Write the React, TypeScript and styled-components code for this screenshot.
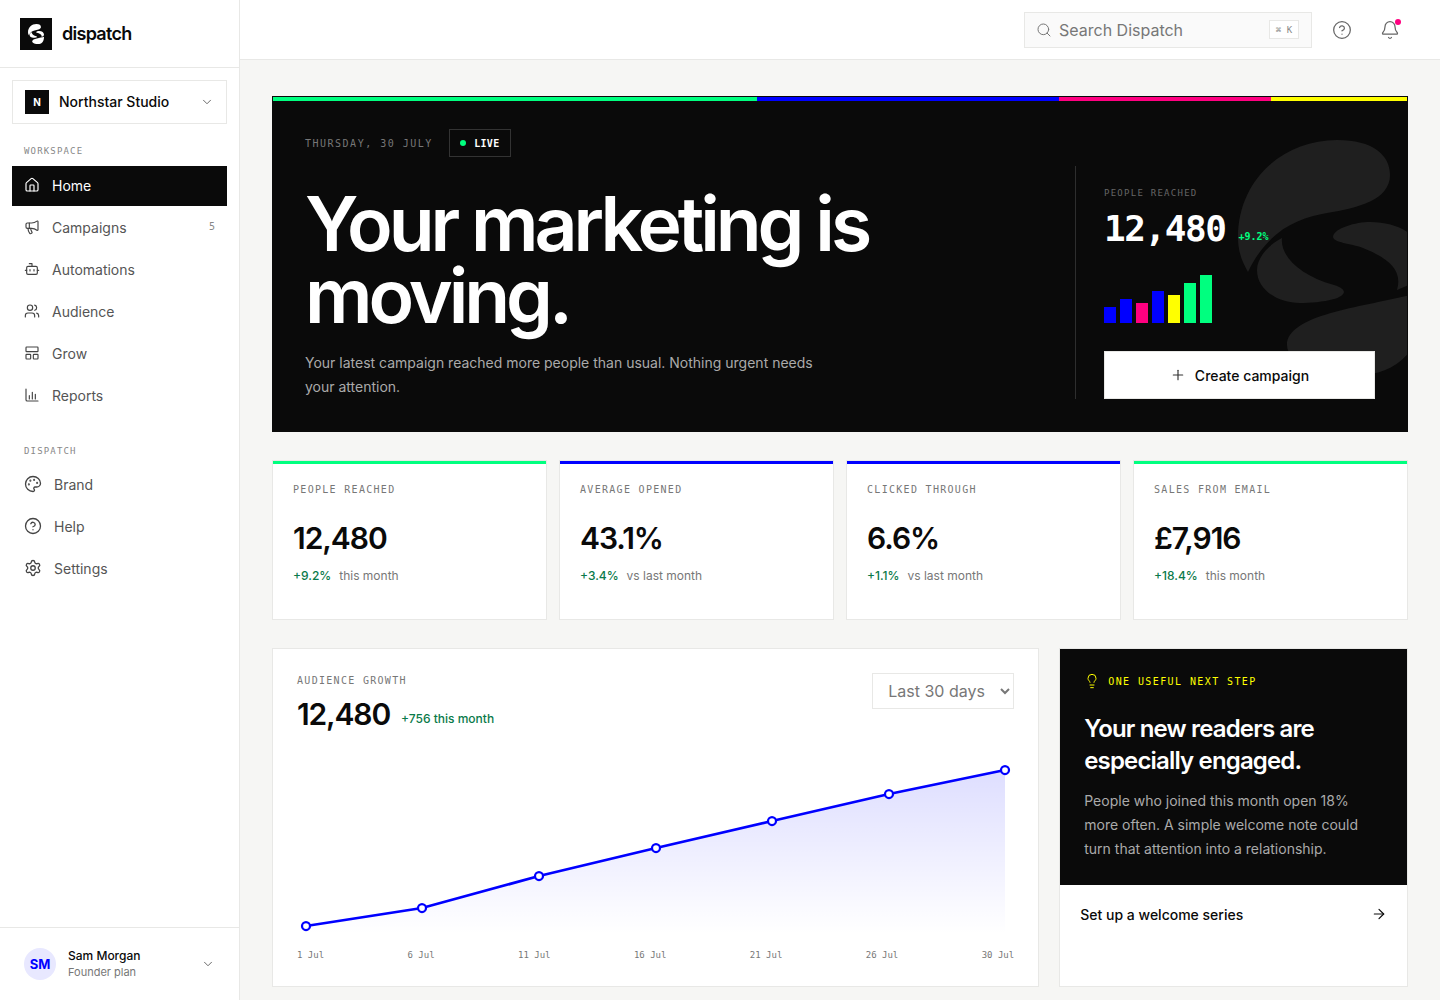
import React from "react";
import styled, { createGlobalStyle } from "styled-components";
import {
  ArrowRight,
  Bell,
  Bot,
  ChevronDown,
  CircleHelp,
  House,
  LayoutPanelTop,
  Lightbulb,
  Megaphone,
  Palette,
  Plus,
  Search,
  Settings,
  Users,
} from "lucide-react";

const INK = "#0a0a0a";
const LINE = "#e8e8e6";
const GREEN = "#00ff7f";
const BLUE = "#0000ff";
const PINK = "#ff0080";
const YELLOW = "#ffff00";
const MONO = `"DejaVu Sans Mono", "Liberation Mono", monospace`;

const GlobalStyle = createGlobalStyle`
  html, body { margin: 0; padding: 0; height: 100%; }
  body {
    font-family: Inter, "Noto Sans", sans-serif;
    background: #f6f6f4;
    color: ${INK};
  }
  * { box-sizing: border-box; }
`;

const S_BLOBS =
  "M0 97C0 40 45 0 99 0C135 0 152 15 152 35C152 60 120 68 89 73C60 78 30 90 10 132C3 120 0 110 0 97Z" +
  "M44 98C42 115 60 135 96 145C112 150 106 156 96 159C85 162 72 163 62 163C40 163 19 150 19 130C19 118 30 105 44 98Z" +
  "M95 97C96 88 118 82 132 82C165 82 188 100 188 125C188 135 180 142 159 150C165 130 150 118 125 108C112 103 96 103 95 97Z" +
  "M188 150C150 165 49 170 49 205C49 225 90 235 120 235C155 235 188 215 188 150Z";

const Shell = styled.div`
  display: grid;
  grid-template-columns: 240px 1fr;
  grid-template-rows: 100vh;
  height: 100vh;
  overflow: hidden;
`;

const Sidebar = styled.aside`
  display: flex;
  flex-direction: column;
  background: #fff;
  border-right: 1px solid ${LINE};
`;

const Brand = styled.div`
  height: 68px;
  flex: none;
  display: flex;
  align-items: center;
  gap: 10px;
  padding: 0 20px;
  border-bottom: 1px solid ${LINE};
`;

const LogoBox = styled.div`
  width: 32px;
  height: 32px;
  background: ${INK};
  display: flex;
  align-items: center;
  justify-content: center;
`;

const BrandName = styled.span`
  font-size: 18px;
  font-weight: 600;
  letter-spacing: -0.04em;
`;

const OrgSwitch = styled.div`
  margin: 12px 12px 0;
  height: 44px;
  border: 1px solid ${LINE};
  display: flex;
  align-items: center;
  gap: 10px;
  padding: 0 12px;
  font-size: 14px;
  font-weight: 500;
  color: #555;

  span { flex: 1; color: ${INK}; padding-bottom: 2px; }
`;

const OrgMark = styled.div`
  width: 24px;
  height: 24px;
  background: ${INK};
  color: #fff;
  font-size: 10px;
  font-weight: 700;
  display: flex;
  align-items: center;
  justify-content: center;
`;

const NavTitle = styled.div<{ $top: number }>`
  margin: ${(p) => p.$top}px 12px 0;
  padding: 0 12px;
  height: 14px;
  line-height: 14px;
  font-family: ${MONO};
  font-size: 9px;
  letter-spacing: 0.13em;
  color: #888;
`;

const NavList = styled.nav<{ $gap: number }>`
  margin: ${(p) => p.$gap}px 12px 0;
  display: flex;
  flex-direction: column;
  gap: 2px;
`;

const NavItem = styled.a<{ $active?: boolean }>`
  height: 40px;
  display: flex;
  align-items: center;
  gap: 12px;
  padding: 0 12px 2px;
  font-size: 14px;
  color: ${(p) => (p.$active ? "#fff" : "#555")};
  background: ${(p) => (p.$active ? INK : "transparent")};

  svg { flex: none; color: ${(p) => (p.$active ? "#fff" : "#444")}; }
`;

const NavCount = styled.span`
  margin-left: auto;
  margin-top: -2px;
  font-family: ${MONO};
  font-size: 10px;
  color: #888;
`;

const UserBar = styled.div`
  margin-top: auto;
  height: 73px;
  flex: none;
  border-top: 1px solid ${LINE};
  display: flex;
  align-items: center;
  gap: 12px;
  padding: 0 24px;
  color: #555;
`;

const Avatar = styled.div`
  width: 32px;
  height: 32px;
  border-radius: 50%;
  background: #e8e8ff;
  color: ${BLUE};
  font-size: 13px;
  font-weight: 700;
  display: flex;
  align-items: center;
  justify-content: center;
`;

const UserText = styled.div`
  flex: 1;
  line-height: 16px;
`;

const UserName = styled.div`
  font-size: 12px;
  font-weight: 500;
  color: ${INK};
`;

const UserPlan = styled.div`
  font-size: 11px;
  color: #777;
`;

const Main = styled.div`
  display: flex;
  flex-direction: column;
  min-width: 0;
`;

const TopBar = styled.header`
  height: 60px;
  flex: none;
  background: #fff;
  border-bottom: 1px solid ${LINE};
  display: flex;
  align-items: center;
  justify-content: flex-end;
  padding: 0 40px 0 0;
  color: #666;
`;

const SearchBox = styled.div`
  width: 288px;
  height: 36px;
  background: #fafafa;
  border: 1px solid ${LINE};
  display: flex;
  align-items: center;
  gap: 7px;
  padding: 0 12px 0 11px;
  font-size: 16px;
  color: #777;
  margin-right: 20px;

  > span { flex: 1; }
`;

const Kbd = styled.kbd`
  width: 30px;
  height: 19px;
  background: #fff;
  border: 1px solid ${LINE};
  font-family: ${MONO};
  font-size: 9px;
  color: #888;
  display: flex;
  align-items: center;
  justify-content: center;
`;

const IconButton = styled.button`
  position: relative;
  width: 20px;
  height: 20px;
  margin-left: 28px;
  padding: 0;
  border: 0;
  background: none;
  color: #666;
  display: flex;
  align-items: center;
  justify-content: center;

  &:first-of-type { margin-left: 0; }
`;

const NoticeDot = styled.i`
  position: absolute;
  top: -1px;
  right: -1px;
  width: 6px;
  height: 6px;
  border-radius: 50%;
  background: ${PINK};
`;

const Content = styled.main`
  padding: 36px 32px;
  display: flex;
  flex-direction: column;
  gap: 28px;
`;

const Hero = styled.section`
  position: relative;
  height: 336px;
  flex: none;
  background: ${INK};
  border: 1px solid ${INK};
  overflow: hidden;
  display: flex;
  flex-direction: column;
`;

const Stripe = styled.div`
  height: 4px;
  flex: none;
  display: grid;
  grid-template-columns: 484fr 302fr 212fr 136fr;
`;

const StripePart = styled.div<{ $color: string }>`
  background: ${(p) => p.$color};
`;

const Watermark = styled.svg`
  position: absolute;
  left: 965px;
  top: 43px;
`;

const HeroBody = styled.div`
  position: relative;
  flex: 1;
  display: flex;
  padding: 28px 32px 32px;
`;

const HeroCopy = styled.div`
  flex: 1;
  min-width: 0;
`;

const HeroMeta = styled.div`
  display: flex;
  align-items: center;
  gap: 16px;
  height: 28px;
`;

const DateLine = styled.span`
  font-family: ${MONO};
  font-size: 10px;
  letter-spacing: 0.15em;
  color: #777;
`;

const LiveChip = styled.span`
  height: 28px;
  width: 62px;
  border: 1px solid #333;
  display: flex;
  align-items: center;
  justify-content: center;
  gap: 8px;
  font-family: ${MONO};
  font-size: 10px;
  font-weight: 700;
  letter-spacing: 0.03em;
  color: #fff;
`;

const LiveDot = styled.i`
  width: 6px;
  height: 6px;
  border-radius: 50%;
  background: ${GREEN};
`;

const HeroTitle = styled.h1`
  margin: 31px 0 0;
  font-size: 75px;
  line-height: 72px;
  font-weight: 600;
  letter-spacing: -0.054em;
  color: #fff;
`;

const HeroText = styled.p`
  margin: 19px 0 0;
  max-width: 540px;
  font-size: 14px;
  line-height: 24px;
  color: #aaa;
`;

const HeroStats = styled.div`
  width: 300px;
  flex: none;
  margin-top: 37px;
  border-left: 1px solid #2e2e2e;
  padding: 20px 0 0 28px;
  display: flex;
  flex-direction: column;
`;

const HeroLabel = styled.div`
  font-family: ${MONO};
  font-size: 9px;
  line-height: 14px;
  letter-spacing: 0.14em;
  color: #666;
`;

const HeroFigure = styled.div`
  margin-top: 7px;
  display: flex;
  align-items: flex-start;
  gap: 13px;
`;

const HeroNumber = styled.span`
  font-family: ${MONO};
  font-size: 36px;
  line-height: 44px;
  font-weight: 700;
  letter-spacing: -0.04em;
  color: #fff;
`;

const HeroDelta = styled.span`
  margin-top: 23px;
  font-family: ${MONO};
  font-size: 10px;
  line-height: 14px;
  font-weight: 700;
  color: ${GREEN};
`;

const Bars = styled.div`
  margin-top: 24px;
  height: 48px;
  display: flex;
  align-items: flex-end;
  gap: 4px;
`;

const Bar = styled.div<{ $h: number; $color: string }>`
  width: 12px;
  height: ${(p) => p.$h}px;
  background: ${(p) => p.$color};
`;

const CreateButton = styled.button`
  margin-top: 28px;
  width: 271px;
  height: 48px;
  background: #fff;
  border: 1px solid ${LINE};
  display: flex;
  align-items: center;
  justify-content: center;
  gap: 9px;
  font-family: Inter, sans-serif;
  font-size: 14px;
  font-weight: 500;
  color: ${INK};

  svg { color: #333; }
`;

const Metrics = styled.section`
  display: grid;
  grid-template-columns: repeat(4, 1fr);
  gap: 12px;
  flex: none;
`;

const MetricCard = styled.article`
  height: 160px;
  background: #fff;
  border: 1px solid ${LINE};
`;

const AccentBar = styled.div<{ $color: string }>`
  height: 3px;
  background: ${(p) => p.$color};
`;

const MetricBody = styled.div`
  padding: 18px 20px 0;
`;

const Eyebrow = styled.div`
  font-family: ${MONO};
  font-size: 10px;
  line-height: 16px;
  letter-spacing: 0.13em;
  color: #777;
`;

const MetricValue = styled.div`
  margin-top: 20px;
  font-size: 30px;
  line-height: 40px;
  font-weight: 600;
  letter-spacing: -0.035em;
`;

const MetricNote = styled.div`
  margin-top: 8px;
  display: flex;
  gap: 8px;
  font-size: 12px;
  line-height: 20px;
  color: #777;

  b { font-weight: 500; color: #0a7a4a; }
`;

const Lower = styled.section`
  display: grid;
  grid-template-columns: 2.2fr 1fr;
  gap: 20px;
  height: 339px;
  flex: none;
`;

const ChartCard = styled.article`
  background: #fff;
  border: 1px solid ${LINE};
  padding: 24px 24px 0;
  display: flex;
  flex-direction: column;
`;

const ChartHead = styled.div`
  display: flex;
  justify-content: space-between;
  align-items: flex-start;
`;

const ChartFigure = styled.div`
  margin-top: 4px;
  display: flex;
  align-items: flex-start;
  gap: 11px;
`;

const ChartNumber = styled.span`
  font-size: 30px;
  line-height: 42px;
  font-weight: 600;
  letter-spacing: -0.038em;
`;

const ChartDelta = styled.span`
  margin-top: 18px;
  font-size: 12px;
  line-height: 16px;
  font-weight: 500;
  color: #0a7a4a;
`;

const RangeSelect = styled.select`
  width: 142px;
  height: 36px;
  background: #fff;
  border: 1px solid ${LINE};
  border-radius: 0;
  padding: 0 8px 0 11px;
  font-family: Inter, sans-serif;
  font-size: 16px;
  color: #777;
`;

const ChartSvg = styled.svg`
  display: block;
  margin-top: 19px;
`;

const AxisRow = styled.div`
  margin-top: 10px;
  display: flex;
  justify-content: space-between;
  font-family: ${MONO};
  font-size: 9px;
  line-height: 14px;
  color: #777;
`;

const StepCard = styled.article`
  background: #fff;
  border: 1px solid ${LINE};
  display: flex;
  flex-direction: column;
`;

const StepDark = styled.div`
  height: 236px;
  flex: none;
  background: ${INK};
  padding: 23px 24px 0 24px;
`;

const StepTag = styled.div`
  display: flex;
  align-items: center;
  gap: 8px;
  height: 18px;
  font-family: ${MONO};
  font-size: 10px;
  letter-spacing: 0.14em;
  color: ${YELLOW};
`;

const StepTitle = styled.h2`
  margin: 23px 0 0;
  font-size: 24px;
  line-height: 32px;
  font-weight: 600;
  letter-spacing: -0.035em;
  color: #fff;
`;

const StepText = styled.p`
  margin: 12px 0 0;
  font-size: 14px;
  line-height: 24px;
  color: #aaa;
`;

const StepAction = styled.div`
  display: flex;
  align-items: center;
  justify-content: space-between;
  height: 58px;
  padding: 0 20px;
  font-size: 14px;
  font-weight: 500;
`;

const mainNav = [
  { label: "Home", icon: <House size={16} strokeWidth={1.75} />, active: true },
  { label: "Campaigns", icon: <Megaphone size={16} strokeWidth={1.75} />, count: "5" },
  { label: "Automations", icon: <Bot size={16} strokeWidth={1.75} /> },
  { label: "Audience", icon: <Users size={16} strokeWidth={1.75} /> },
  { label: "Grow", icon: <LayoutPanelTop size={16} strokeWidth={1.75} /> },
  {
    label: "Reports",
    icon: (
      <svg width="16" height="16" viewBox="0 0 24 24" fill="none" stroke="currentColor" strokeWidth="1.75" strokeLinecap="round" strokeLinejoin="round">
        <path d="M3 3v16a2 2 0 0 0 2 2h16" />
        <path d="M8 18v-5M12.5 18V8M17 18v-7" />
      </svg>
    ),
  },
];

const otherNav = [
  { label: "Brand", icon: <Palette size={18} strokeWidth={1.75} /> },
  { label: "Help", icon: <CircleHelp size={18} strokeWidth={1.75} /> },
  { label: "Settings", icon: <Settings size={18} strokeWidth={1.75} /> },
];

const metrics = [
  { label: "PEOPLE REACHED", value: "12,480", delta: "+9.2%", note: "this month", accent: GREEN },
  { label: "AVERAGE OPENED", value: "43.1%", delta: "+3.4%", note: "vs last month", accent: BLUE },
  { label: "CLICKED THROUGH", value: "6.6%", delta: "+1.1%", note: "vs last month", accent: BLUE },
  { label: "SALES FROM EMAIL", value: "£7,916", delta: "+18.4%", note: "this month", accent: GREEN },
];

const heroBars = [
  { h: 16, color: BLUE },
  { h: 24, color: BLUE },
  { h: 20, color: PINK },
  { h: 32, color: BLUE },
  { h: 28, color: YELLOW },
  { h: 40, color: GREEN },
  { h: 48, color: GREEN },
];

// chart points, measured from the left of the plot
const points = [
  [9, 172],
  [125, 154],
  [242, 122],
  [359, 94],
  [475, 67],
  [592, 40],
  [708, 16],
];
const linePath = points.map(([x, y], i) => `${i ? "L" : "M"}${x} ${y}`).join(" ");
const days = ["1 Jul", "6 Jul", "11 Jul", "16 Jul", "21 Jul", "26 Jul", "30 Jul"];

const Mark = ({ size }: { size: number }) => (
  <svg width={size * 0.8} height={size} viewBox="0 0 188 235" fill="#fff">
    <path d={S_BLOBS} />
  </svg>
);

export default function App() {
  return (
    <>
      <GlobalStyle />
      <Shell>
        <Sidebar>
          <Brand>
            <LogoBox>
              <Mark size={20} />
            </LogoBox>
            <BrandName>dispatch</BrandName>
          </Brand>
          <OrgSwitch>
            <OrgMark>N</OrgMark>
            <span>Northstar Studio</span>
            <ChevronDown size={14} strokeWidth={1.5} />
          </OrgSwitch>
          <NavTitle $top={20}>WORKSPACE</NavTitle>
          <NavList $gap={8}>
            {mainNav.map((item) => (
              <NavItem key={item.label} $active={item.active}>
                {item.icon}
                {item.label}
                {item.count && <NavCount>{item.count}</NavCount>}
              </NavItem>
            ))}
          </NavList>
          <NavTitle $top={28}>DISPATCH</NavTitle>
          <NavList $gap={7}>
            {otherNav.map((item) => (
              <NavItem key={item.label}>
                {item.icon}
                {item.label}
              </NavItem>
            ))}
          </NavList>
          <UserBar>
            <Avatar>SM</Avatar>
            <UserText>
              <UserName>Sam Morgan</UserName>
              <UserPlan>Founder plan</UserPlan>
            </UserText>
            <ChevronDown size={14} strokeWidth={1.5} />
          </UserBar>
        </Sidebar>

        <Main>
          <TopBar>
            <SearchBox>
              <Search size={16} strokeWidth={1.5} />
              <span>Search Dispatch</span>
              <Kbd>⌘ K</Kbd>
            </SearchBox>
            <IconButton>
              <CircleHelp size={20} strokeWidth={1.5} />
            </IconButton>
            <IconButton>
              <Bell size={20} strokeWidth={1.5} />
              <NoticeDot />
            </IconButton>
          </TopBar>

          <Content>
            <Hero>
              <Stripe>
                <StripePart $color={GREEN} />
                <StripePart $color={BLUE} />
                <StripePart $color={PINK} />
                <StripePart $color={YELLOW} />
              </Stripe>
              <Watermark width="188" height="235" viewBox="0 0 188 235" fill="#1f1f1f">
                <path d={S_BLOBS} />
              </Watermark>
              <HeroBody>
                <HeroCopy>
                  <HeroMeta>
                    <DateLine>THURSDAY, 30 JULY</DateLine>
                    <LiveChip>
                      <LiveDot />
                      LIVE
                    </LiveChip>
                  </HeroMeta>
                  <HeroTitle>
                    Your marketing is
                    <br />
                    moving.
                  </HeroTitle>
                  <HeroText>
                    Your latest campaign reached more people than usual. Nothing urgent needs your attention.
                  </HeroText>
                </HeroCopy>
                <HeroStats>
                  <HeroLabel>PEOPLE REACHED</HeroLabel>
                  <HeroFigure>
                    <HeroNumber>12,480</HeroNumber>
                    <HeroDelta>+9.2%</HeroDelta>
                  </HeroFigure>
                  <Bars>
                    {heroBars.map((bar, i) => (
                      <Bar key={i} $h={bar.h} $color={bar.color} />
                    ))}
                  </Bars>
                  <CreateButton>
                    <Plus size={16} strokeWidth={1.75} />
                    Create campaign
                  </CreateButton>
                </HeroStats>
              </HeroBody>
            </Hero>

            <Metrics>
              {metrics.map((m) => (
                <MetricCard key={m.label}>
                  <AccentBar $color={m.accent} />
                  <MetricBody>
                    <Eyebrow>{m.label}</Eyebrow>
                    <MetricValue>{m.value}</MetricValue>
                    <MetricNote>
                      <b>{m.delta}</b>
                      {m.note}
                    </MetricNote>
                  </MetricBody>
                </MetricCard>
              ))}
            </Metrics>

            <Lower>
              <ChartCard>
                <ChartHead>
                  <div>
                    <Eyebrow>AUDIENCE GROWTH</Eyebrow>
                    <ChartFigure>
                      <ChartNumber>12,480</ChartNumber>
                      <ChartDelta>+756 this month</ChartDelta>
                    </ChartFigure>
                  </div>
                  <RangeSelect defaultValue="30">
                    <option value="30">Last 30 days</option>
                    <option value="90">Last 90 days</option>
                  </RangeSelect>
                </ChartHead>
                <ChartSvg width="717" height="184" viewBox="0 0 717 184">
                  <defs>
                    <linearGradient id="growth" x1="0" y1="0" x2="0" y2="1">
                      <stop offset="0" stopColor={BLUE} stopOpacity="0.13" />
                      <stop offset="1" stopColor={BLUE} stopOpacity="0" />
                    </linearGradient>
                  </defs>
                  <path d={`${linePath} L708 180 L9 180 Z`} fill="url(#growth)" />
                  <path d={linePath} fill="none" stroke={BLUE} strokeWidth="2.75" />
                  {points.map(([x, y]) => (
                    <circle key={x} cx={x} cy={y} r="4" fill="#fff" stroke={BLUE} strokeWidth="2.25" />
                  ))}
                </ChartSvg>
                <AxisRow>
                  {days.map((d) => (
                    <span key={d}>{d}</span>
                  ))}
                </AxisRow>
              </ChartCard>

              <StepCard>
                <StepDark>
                  <StepTag>
                    <Lightbulb size={16} strokeWidth={1.5} />
                    ONE USEFUL NEXT STEP
                  </StepTag>
                  <StepTitle>
                    Your new readers are
                    <br />
                    especially engaged.
                  </StepTitle>
                  <StepText>
                    People who joined this month open 18% more often. A simple welcome note could turn that attention into a relationship.
                  </StepText>
                </StepDark>
                <StepAction>
                  Set up a welcome series
                  <ArrowRight size={16} strokeWidth={1.75} />
                </StepAction>
              </StepCard>
            </Lower>
          </Content>
        </Main>
      </Shell>
    </>
  );
}
